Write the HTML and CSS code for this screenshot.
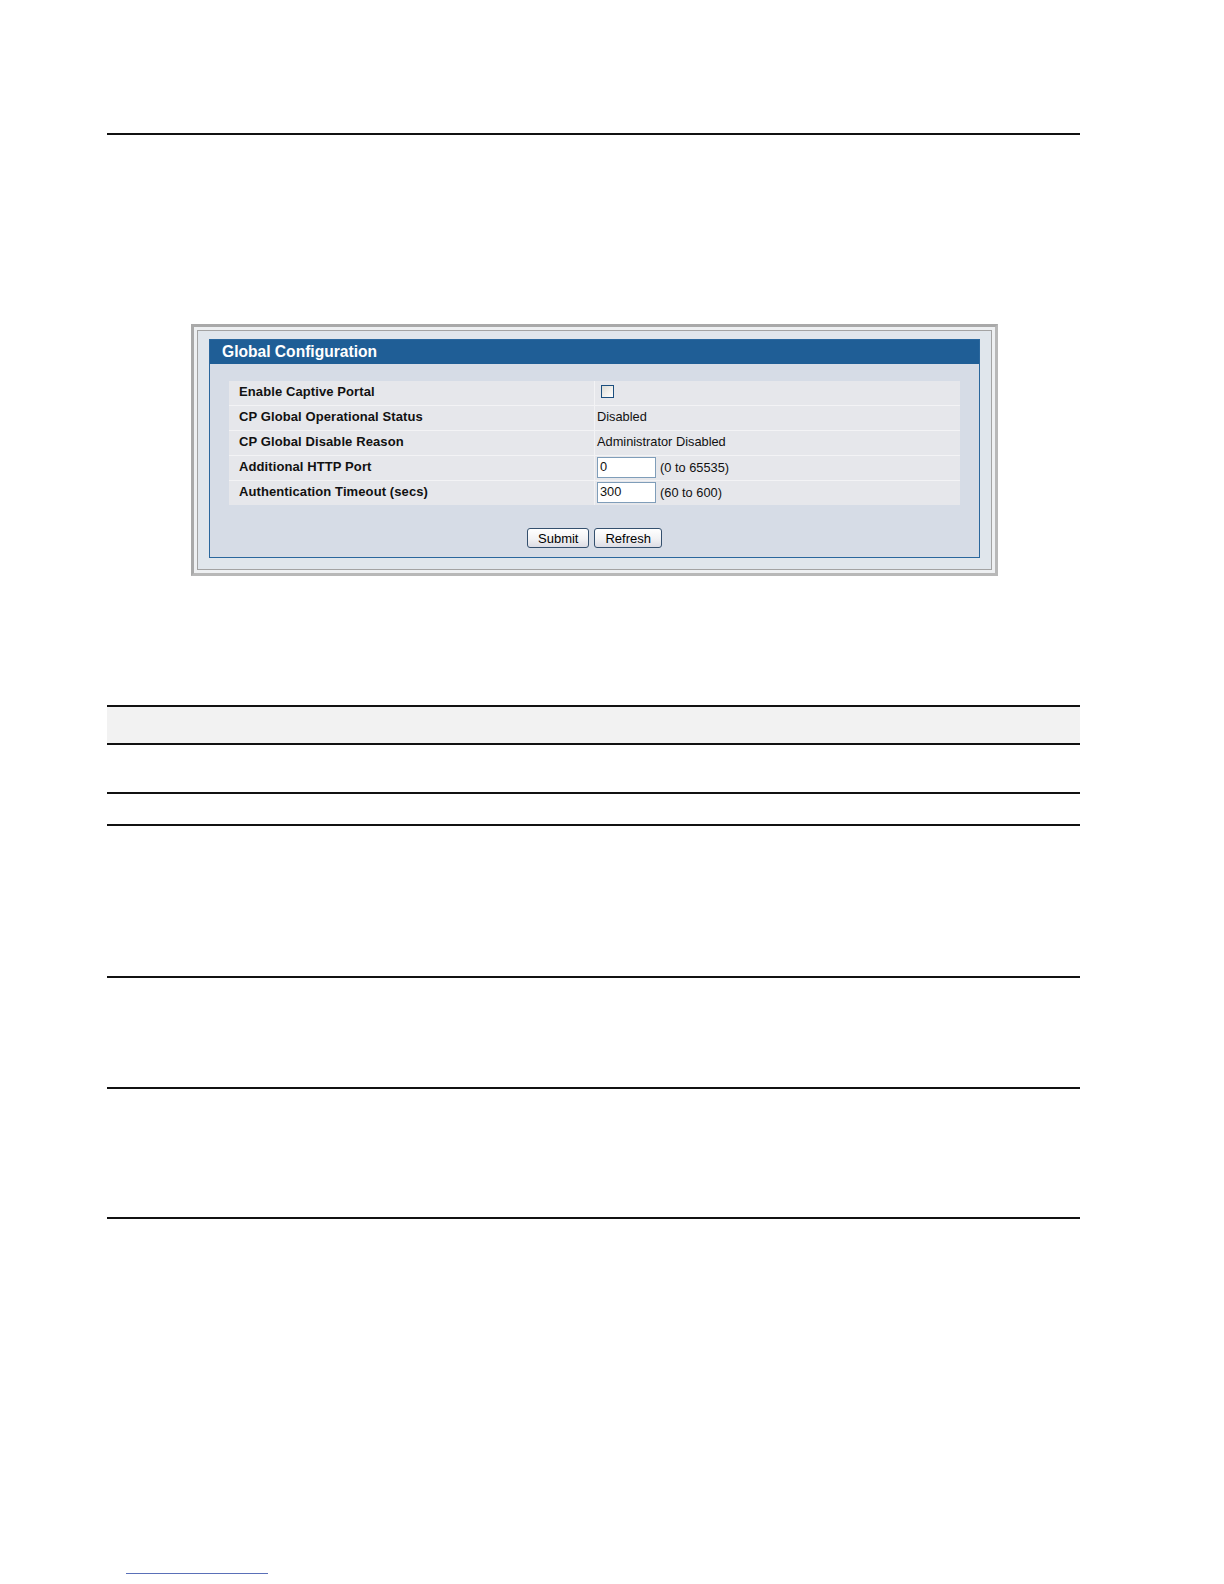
FILE: index.html
```html
<!DOCTYPE html>
<html>
<head>
<meta charset="utf-8">
<title>Global Configuration</title>
<link rel="stylesheet" href="styles.css">
</head>
<body>
<div class="page">
  <div class="rule-top"></div>

  <div class="figure">
    <div class="shot">
      <div class="shot-inner">
        <div class="panel">
          <div class="panel-title">Global Configuration</div>
          <div class="panel-body">
            <div class="cfg">
              <div class="cell label">Enable Captive Portal</div>
              <div class="cell value"><span class="checkbox"></span></div>

              <div class="cell label">CP Global Operational Status</div>
              <div class="cell value">Disabled</div>

              <div class="cell label">CP Global Disable Reason</div>
              <div class="cell value">Administrator Disabled</div>

              <div class="cell label">Additional HTTP Port</div>
              <div class="cell value"><span class="field">0</span><span class="range">(0 to 65535)</span></div>

              <div class="cell label">Authentication Timeout (secs)</div>
              <div class="cell value"><span class="field">300</span><span class="range">(60 to 600)</span></div>
            </div>
            <div class="actions">
              <button class="btn" type="button">Submit</button>
              <button class="btn" type="button">Refresh</button>
            </div>
          </div>
        </div>
      </div>
    </div>
  </div>

  <div class="doc-table">
    <div class="dt-row dt-head"></div>
    <div class="dt-row r1"></div>
    <div class="dt-row r2"></div>
    <div class="dt-row r3"></div>
    <div class="dt-row r4"></div>
    <div class="dt-row r5 last"></div>
  </div>

  <div class="foot-rule"></div>
</div>
</body>
</html>
```

FILE: styles.css
```css
html, body {
  margin: 0;
  padding: 0;
  background: #ffffff;
}

body {
  font-family: "Liberation Sans", Arial, sans-serif;
  color: #000;
}

.page {
  width: 1224px;
  height: 1584px;
  padding-top: 133px;
  box-sizing: border-box;
  overflow: hidden;
}

.rule-top {
  margin-left: 107px;
  width: 973px;
  border-top: 2px solid #111;
}

/* screenshot figure */
.figure {
  margin: 189px 0 0 191px;
  width: 807px;
}

.shot {
  border: 3px solid #a9a9a9;
  border-right-color: #b8b8b8;
  border-bottom-color: #b8b8b8;
  background: #eef0f2;
  padding: 3px;
}

.shot-inner {
  border: 1px solid #a3a3a3;
  background: #e0e6ec;
  padding: 8px 11px 11px 11px;
}

.panel {
  border: 1px solid #2a679d;
  background: #d6dce6;
}

.panel-title {
  height: 24px;
  line-height: 24px;
  background: #1f5e96;
  color: #ffffff;
  font-weight: bold;
  font-size: 15.6px;
  padding-left: 12px;
}

.panel-body {
  padding: 17px 19px 9px 19px;
}

.cfg {
  display: grid;
  grid-template-columns: 1fr 1fr;
  gap: 1px;
  background: #f3f3f5;
}

.cell {
  height: 24px;
  background: #e6e7eb;
  display: flex;
  align-items: center;
  box-sizing: border-box;
}

.cell.label {
  padding-left: 10px;
  padding-bottom: 3px;
  font-weight: bold;
  font-size: 13px;
  letter-spacing: 0.1px;
  color: #111;
}

.cell.value {
  padding-left: 2px;
  padding-bottom: 3px;
  font-size: 12.8px;
  color: #111;
}

.checkbox {
  display: inline-block;
  width: 11px;
  height: 11px;
  margin-left: 4px;
  border: 1px solid #1c4f7e;
  background: linear-gradient(135deg, #dcdcd6 0%, #f4f2ee 60%, #ffffff 100%);
}

.field {
  display: inline-block;
  width: 59px;
  height: 21px;
  box-sizing: border-box;
  border: 1px solid #7f9db9;
  background: #ffffff;
  padding-left: 2px;
  line-height: 18px;
  font-size: 12.8px;
  margin-top: 2px;
}

.range {
  margin-left: 4px;
  padding-top: 2px;
}

.actions {
  display: flex;
  justify-content: center;
  gap: 5px;
  margin-top: 23px;
}

.btn {
  height: 20px;
  padding: 0 10px;
  font-family: "Liberation Sans", Arial, sans-serif;
  font-size: 13px;
  color: #000;
  border: 1px solid #34506e;
  border-radius: 3px;
  background: linear-gradient(#ffffff 0%, #f2f2f4 55%, #dcdce4 100%);
  line-height: 17px;
}

/* document table rules */
.doc-table {
  margin: 129px 0 0 107px;
  width: 973px;
}

.dt-row {
  border-top: 2px solid #111;
}

.dt-head {
  height: 36px;
  background: #f2f2f2;
}

.r1 { height: 47px; }
.r2 { height: 30px; }
.r3 { height: 150px; }
.r4 { height: 109px; }
.r5 { height: 128px; }

.dt-row.last {
  border-bottom: 2px solid #111;
}

.foot-rule {
  margin: 354px 0 0 126px;
  width: 142px;
  border-top: 1px solid #5a70b8;
}
```
